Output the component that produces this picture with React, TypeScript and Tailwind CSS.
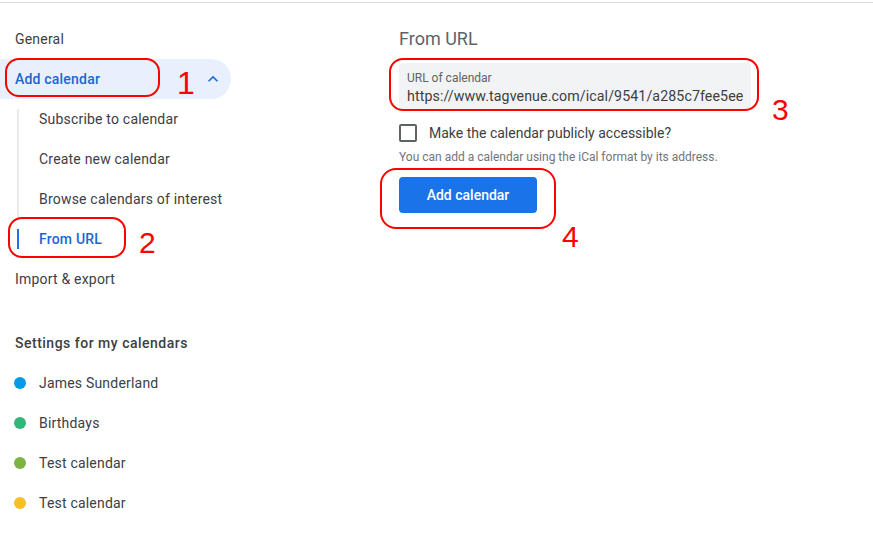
import React from "react";

const subItems = ["Subscribe to calendar", "Create new calendar", "Browse calendars of interest"];

const calendars = [
  { name: "James Sunderland", color: "bg-[#039be5]" },
  { name: "Birthdays", color: "bg-[#33b679]" },
  { name: "Test calendar", color: "bg-[#7cb342]" },
  { name: "Test calendar", color: "bg-[#f6bf26]" },
];

function Sidebar() {
  return (
    <div className="w-[231px] shrink-0 pt-4 text-[14px] tracking-[0.2px] text-[#3c4043]">
      <div className="h-10 flex items-center pl-[15px]">General</div>
      <div className="h-10 flex items-center justify-between pl-[15px] pr-[8px] bg-[#e8f0fe] rounded-r-full font-medium text-[#1967d2]">
        <span>Add calendar</span>
        <svg width="20" height="20" viewBox="0 0 24 24" className="fill-[#1967d2]">
          <path d="M12 8l-6 6 1.41 1.41L12 10.83l4.59 4.58L18 14z" />
        </svg>
      </div>
      {subItems.map((label, i) => (
        <div key={label} className="h-10 flex items-stretch">
          <div className={`ml-[17px] w-[2px] bg-[#e8eaed] ${i === 0 ? "mt-[10px]" : ""}`} />
          <div className="flex items-center pl-[20px]">{label}</div>
        </div>
      ))}
      <div className="h-10 flex items-center">
        <div className="ml-[17px] w-[2px] h-5 bg-[#1a73e8]" />
        <div className="pl-[20px] font-medium text-[#1967d2]">From URL</div>
      </div>
      <div className="h-10 flex items-center pl-[15px]">Import &amp; export</div>

      <div className="mt-6 h-10 flex items-center pl-[15px] font-medium tracking-[0.5px] text-[#3c4043]">
        Settings for my calendars
      </div>
      {calendars.map((c, i) => (
        <div key={i} className="h-10 flex items-center pl-[14px] gap-[13px]">
          <span className={`w-3 h-3 rounded-full ${c.color}`} />
          <span>{c.name}</span>
        </div>
      ))}
    </div>
  );
}

function Main() {
  return (
    <div className="pl-[168px] pt-6 text-[#3c4043]">
      <div className="text-[18px] leading-6 text-[#5f6368]">From URL</div>
      <div className="mt-3 w-[352px] h-[46px] bg-[#f1f3f4] rounded-t-[4px] pl-2 pr-[7px] pt-[7px] overflow-hidden">
        <div className="text-[12px] leading-4 text-[#5f6368]">URL of calendar</div>
        <div className="text-[14.2px] leading-5 tracking-[0.1px] whitespace-nowrap overflow-hidden">
          https://www.tagvenue.com/ical/9541/a285c7fee5ee7a2c1b8d
        </div>
      </div>
      <div className="mt-3 h-6 flex items-center gap-[12px]">
        <span className="w-[18px] h-[18px] border-2 border-[#5f6368] rounded-[2px]" />
        <span className="text-[14px]">Make the calendar publicly accessible?</span>
      </div>
      <div className="mt-1 text-[12px] leading-4 text-[#70757a]">
        You can add a calendar using the iCal format by its address.
      </div>
      <button className="mt-3 w-[138px] h-9 bg-[#1a73e8] rounded-[4px] text-white text-[14px] font-medium">
        Add calendar
      </button>
    </div>
  );
}

export default function App() {
  return (
    <div
      className="relative w-[873px] h-[543px] bg-white overflow-hidden"
      style={{ fontFamily: "Roboto, 'Liberation Sans', sans-serif" }}
    >
      <div className="mt-[2px] border-t border-[#dadce0] flex">
        <Sidebar />
        <Main />
      </div>

      {/* annotations */}
      <div className="absolute left-[5px] top-[58px] w-[155px] h-[39px] border-2 border-[#ff0000] rounded-[14px]" />
      <div className="absolute left-[8px] top-[217px] w-[118px] h-[41px] border-2 border-[#ff0000] rounded-[14px]" />
      <div className="absolute left-[389px] top-[58px] w-[370px] h-[53px] border-2 border-[#ff0000] rounded-[14px]" />
      <div className="absolute left-[380px] top-[168px] w-[176px] h-[61px] border-2 border-[#ff0000] rounded-[16px]" />
      {[
        { n: "1", c: "left-[177px] top-[68px] text-[32px]" },
        { n: "2", c: "left-[139px] top-[228px] text-[30px]" },
        { n: "3", c: "left-[772px] top-[95px] text-[30px]" },
        { n: "4", c: "left-[562px] top-[222px] text-[30px]" },
      ].map((d) => (
        <span
          key={d.n}
          className={`absolute ${d.c} leading-[30px] text-[#ff0000]`}
          style={{ fontFamily: "'Liberation Sans', sans-serif" }}
        >
          {d.n}
        </span>
      ))}
    </div>
  );
}
